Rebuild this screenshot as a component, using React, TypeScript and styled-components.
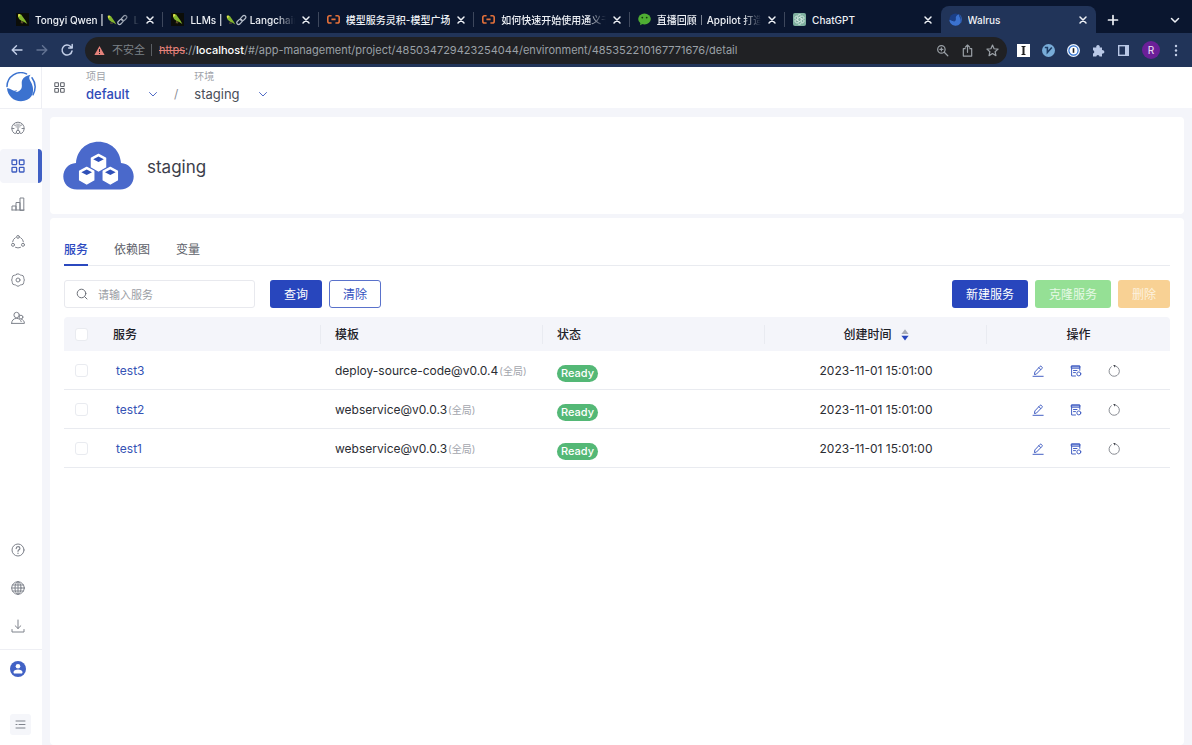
import React from "react";
import styled, { createGlobalStyle, css } from "styled-components";

const Global = createGlobalStyle`
  * { box-sizing: border-box; }
  body {
    margin: 0;
    background: #f4f5fa;
    color: #2b2d33;
    font: 12px/18px Inter, "Noto Sans CJK SC", sans-serif;
  }
  button, input, select { font: inherit; color: inherit; margin: 0; }
  button { border: 0; padding: 0; background: none; cursor: pointer; }
  a { text-decoration: none; }
  svg { display: block; flex: none; }
  h1 { margin: 0; }
`;

const Window = styled.div`
  display: flex;
  flex-direction: column;
  min-height: 100vh;
`;

/* ---------- browser frame ---------- */

const TabStrip = styled.div`
  display: flex;
  align-items: flex-end;
  height: 33px;
  padding-left: 8px;
  background: #0a162f;
  color: #eef1f6;
`;

const BrowserTab = styled.div<{ $active?: boolean; $divider?: boolean }>`
  display: flex;
  align-items: center;
  flex: 1 1 0;
  min-width: 0;
  height: 27px;
  padding: 0 8px;
  gap: 6px;
  position: relative;
  border-radius: 8px 8px 0 0;
  ${(p) => p.$active && css`background: #213459;`}
  ${(p) =>
    p.$divider &&
    css`
      &::after {
        content: "";
        position: absolute;
        right: 0;
        top: 6px;
        height: 15px;
        width: 1px;
        background: #3d475c;
      }
    `}
`;

const TabTitle = styled.span<{ $fade?: boolean }>`
  display: flex;
  align-items: center;
  flex: 1;
  min-width: 0;
  overflow: hidden;
  white-space: pre;
  font-size: 10px;
  font-weight: 500;
  ${(p) => p.$fade && css`mask-image: linear-gradient(to right, #000 82%, transparent 100%);`}
`;

const ChromeButton = styled.button`
  display: flex;
  align-items: center;
  justify-content: center;
  color: inherit;
`;

const StripEnd = styled.div`
  display: flex;
  justify-content: space-between;
  align-items: center;
  flex: 0 0 96px;
  height: 27px;
  padding: 0 12px 0 11px;
`;

const NavBar = styled.div`
  display: flex;
  align-items: center;
  height: 34px;
  padding: 0 9px 0 10px;
  background: #213459;
  color: #c3cfe8;
`;

const NavGroup = styled.div<{ $gap: number }>`
  display: flex;
  align-items: center;
  gap: ${(p) => p.$gap}px;
`;

const AddressBar = styled.div`
  display: flex;
  align-items: center;
  flex: 1;
  min-width: 0;
  height: 27px;
  margin: 0 10px 0 11px;
  padding: 0 8px 0 9px;
  border-radius: 14px;
  background: #202124;
  color: #9aa0a6;
  font-size: 11px;
`;

const Insecure = styled.span`
  padding: 0 6px 0 7px;
  line-height: 12px;
  margin-right: 7px;
  border-right: 1px solid #5b5f64;
  color: #7b8086;
`;

const Url = styled.span`
  flex: 1;
  overflow: hidden;
  white-space: nowrap;
  s { color: #e5827b; }
  b { color: #fff; font-weight: 500; }
`;

const Avatar = styled.span`
  display: grid;
  place-items: center;
  width: 18px;
  height: 18px;
  border-radius: 50%;
  background: #6b1f98;
  color: #f3e9fa;
  font-size: 10px;
`;

/* ---------- application ---------- */

const AppFrame = styled.div`
  display: flex;
  flex: 1;
`;

const Sidebar = styled.nav`
  display: flex;
  flex-direction: column;
  flex: 0 0 42px;
  background: #fff;
  color: #7f838c;
`;

const LogoLink = styled.a`
  display: flex;
  height: 42px;
  padding: 5px 0 0 6px;
  border-bottom: 1px solid #eeeff4;
  border-right: 1px solid #eeeff4;
`;

const MenuList = styled.div<{ $bottom?: boolean }>`
  display: flex;
  flex-direction: column;
  gap: 4px;
  padding: ${(p) => (p.$bottom ? "0 0 6px" : "2px 0 0")};
  margin-top: ${(p) => (p.$bottom ? "auto" : "0")};
  border-bottom: ${(p) => (p.$bottom ? "1px solid #eeeff4" : "0")};
`;

const MenuItem = styled.button<{ $active?: boolean }>`
  display: flex;
  align-items: center;
  height: 34px;
  padding-left: 11px;
  border-right: 4px solid transparent;
  ${(p) =>
    p.$active &&
    css`
      background: #f4f5fa;
      color: #3d5cc0;
      border-right-color: #3f5fc4;
      border-radius: 4px;
    `}
`;

const UserButton = styled.button`
  height: 38px;
  padding-left: 10px;
  display: flex;
  align-items: center;
`;

const CollapseButton = styled.button`
  display: grid;
  place-items: center;
  width: 21px;
  height: 21px;
  margin: 26px 0 10px 10px;
  border-radius: 3px;
  background: #f5f6fa;
`;

const Content = styled.div`
  display: flex;
  flex-direction: column;
  flex: 1;
  min-width: 0;
`;

const Header = styled.header`
  display: flex;
  align-items: center;
  height: 41px;
  padding-left: 12px;
  background: #fff;
  color: #5c6068;
`;

const Crumbs = styled.div`
  display: flex;
  align-items: flex-end;
  margin-left: 21px;
  padding-bottom: 3px;
`;

const Crumb = styled.label`
  display: grid;
  grid-template-columns: auto;
  justify-items: start;
  line-height: 16px;
  color: #a0a3aa;
  font-size: 10px;
`;

const PickerBox = styled.span`
  display: grid;
  align-items: center;
  color: #4f6ac6;
  > * { grid-area: 1 / 1; }
  > svg { justify-self: end; pointer-events: none; }
`;

const Picker = styled.select<{ $strong?: boolean }>`
  appearance: none;
  border: 0;
  background: transparent;
  padding: 0 28px 0 0;
  height: 20px;
  font-size: 13px;
  font-weight: ${(p) => (p.$strong ? 500 : 400)};
  color: ${(p) => (p.$strong ? "#2f4cb8" : "#4a4e58")};
`;

const Slash = styled.span`
  padding: 0 16px;
  line-height: 20px;
  color: #8d9098;
`;

const Main = styled.main`
  display: flex;
  flex-direction: column;
  flex: 1;
  gap: 4px;
  padding: 9px 8px 0;
`;

const Card = styled.section<{ $grow?: boolean }>`
  background: #fff;
  border-radius: 4px;
  padding: ${(p) => (p.$grow ? "16px 14px" : "24px 13px")};
  flex: ${(p) => (p.$grow ? "1" : "none")};
`;

const TitleRow = styled.div`
  display: flex;
  align-items: center;
  gap: 13px;
`;

const Title = styled.h1`
  padding-top: 2px;
  font-size: 17px;
  line-height: 24px;
  font-weight: 400;
  color: #3c404a;
`;

const Tabs = styled.div`
  display: flex;
  gap: 26px;
  border-bottom: 1px solid #e9ebf0;
`;

const Tab = styled.button<{ $active?: boolean }>`
  height: 32px;
  padding-top: 2px;
  margin-bottom: -1px;
  border-bottom: 2px solid ${(p) => (p.$active ? "#2b49bf" : "transparent")};
  color: ${(p) => (p.$active ? "#2b49bf" : "#5d6169")};
  font-weight: ${(p) => (p.$active ? 500 : 400)};
`;

const Toolbar = styled.div`
  display: flex;
  align-items: center;
  gap: 7px;
  padding: 14px 0 9px;
`;

const SearchBox = styled.label`
  display: flex;
  align-items: center;
  gap: 10px;
  width: 191px;
  height: 28px;
  padding: 0 11px;
  margin-right: 8px;
  border: 1px solid #e8e9ee;
  border-radius: 3px;
  color: #6c7078;
`;

const SearchInput = styled.input`
  flex: 1;
  min-width: 0;
  padding: 2px 0 0;
  border: 0;
  outline: 0;
  font-size: 11px;
  &::placeholder { color: #9a9da4; }
`;

const kinds = {
  primary: css`background: #2846bd; color: #fff;`,
  outline: css`background: #fff; color: #3553bf; border: 1px solid #5a72cb;`,
  success: css`background: #95e095; color: #e6f9e6;`,
  warning: css`background: #f8d194; color: #fdf1de;`,
};

const Button = styled.button<{ $kind: keyof typeof kinds }>`
  height: 28px;
  padding: 2px 14px 0;
  border-radius: 3px;
  ${(p) => kinds[p.$kind]}
`;

const OutlineButton = styled(Button)`
  padding: 2px 13px 0;
`;

const Spacer = styled.span`
  flex: 1;
`;

const Table = styled.table`
  width: 100%;
  table-layout: fixed;
  border-collapse: separate;
  border-spacing: 0;
`;

const Th = styled.th<{ $width?: string; $center?: boolean; $divider?: boolean }>`
  width: ${(p) => p.$width ?? "auto"};
  height: 34px;
  padding: 2px 14px 0;
  text-align: ${(p) => (p.$center ? "center" : "left")};
  font-weight: 500;
  color: #1d2027;
  background: ${(p) =>
    p.$divider
      ? "linear-gradient(#e9ebf1, #e9ebf1) right center / 1px 19px no-repeat #f4f5fa"
      : "#f4f5fa"};
  &:first-child { border-radius: 4px 0 0 0; padding: 0 11px; }
  &:last-child { border-radius: 0 4px 0 0; }
`;

const Td = styled.td<{ $center?: boolean }>`
  height: 39px;
  padding: 2px 14px 0;
  border-bottom: 1px solid #e9ebf0;
  white-space: nowrap;
  text-align: ${(p) => (p.$center ? "center" : "left")};
  &:first-child { padding: 0 11px; }
`;

const Checkbox = styled.input`
  appearance: none;
  display: block;
  width: 13px;
  height: 13px;
  margin: 0;
  border: 1px solid #e9ebf0;
  border-radius: 3px;
  background: #fff;
`;

const SortLabel = styled.button`
  display: inline-flex;
  align-items: center;
  gap: 9px;
  font-weight: 500;
  vertical-align: middle;
`;

const ServiceLink = styled.a`
  padding-left: 3px;
  color: #3553b5;
`;

const Scope = styled.span`
  margin-left: 1px;
  font-size: 10px;
  color: #a3a6ad;
`;

const Status = styled.span`
  display: block;
  width: fit-content;
  margin-top: 5px;
  padding: 0 4px;
  border-radius: 9px;
  background: #54b876;
  color: #fff;
  font-size: 11px;
  line-height: 17px;
  font-weight: 500;
`;

const Actions = styled.div`
  display: flex;
  justify-content: center;
  gap: 26px;
  padding-right: 5px;
  color: #4460c4;
`;

const IconButton = styled.button<{ $muted?: boolean }>`
  color: ${(p) => (p.$muted ? "#7b7e86" : "inherit")};
`;

/* ---------- drawings ---------- */

type IconProps = { size?: number; view?: number; width?: number; children: React.ReactNode };

const Icon = ({ size = 14, view = 14, width = 1, children }: IconProps) => (
  <svg
    width={size}
    height={size}
    viewBox={`0 0 ${view} ${view}`}
    fill="none"
    stroke="currentColor"
    strokeWidth={width}
    strokeLinecap="round"
    strokeLinejoin="round"
    aria-hidden="true"
  >
    {children}
  </svg>
);

const CloseIcon = () => (
  <Icon size={10} view={10} width={1.5}><path d="M2 2l6 6M8 2L2 8" /></Icon>
);

const ChevronIcon = ({ size = 10, width = 1 }: { size?: number; width?: number }) => (
  <Icon size={size} view={10} width={width}><path d="M1.5 3.500L5 7l3.500-3.500" /></Icon>
);

const ParrotShape = () => (
  <>
    <path d="M2 1.400C3.600.4 5.600 1.200 6.200 3l3.400 4.800 1.700 3.200-3.500-2.200C5 8 2.200 5.800 2 3.300z" fill="#84b62e" stroke="none" />
    <path d="M2 1.600l1.800-.6.6 1.700L2.300 4z" fill="#dfdf4b" stroke="none" />
    <path d="M5.600 8.200l-.4 2M7 8.800l-.6 1.600" stroke="#8a6b3b" strokeWidth=".8" />
  </>
);

const ParrotFavicon = () => (
  <svg width="13" height="13" viewBox="0 0 13 13" aria-hidden="true">
    <rect width="13" height="13" fill="#0b0d08" />
    <ParrotShape />
  </svg>
);

const ParrotLink = () => (
  <>
    <svg width="11" height="12" viewBox="0 0 12 12" aria-hidden="true"><ParrotShape /></svg>
    <svg width="11" height="12" viewBox="0 0 12 12" fill="none" stroke="#b5bdc9" strokeWidth="1.300" aria-hidden="true">
      <rect x="-3.300" y="-1.900" width="6.600" height="3.800" rx="1.900" transform="translate(3.800 8) rotate(-45)" />
      <rect x="-3.300" y="-1.900" width="6.600" height="3.800" rx="1.900" transform="translate(7.800 4) rotate(-45)" />
    </svg>
  </>
);

const AliyunFavicon = () => (
  <svg width="13" height="13" viewBox="0 0 13 13" fill="none" stroke="#e2703a" strokeWidth="1.600" aria-hidden="true">
    <path d="M4.600 2.800H2.600Q.8 2.800.8 4.600v3.600Q.8 10 2.600 10h2M8.400 2.800h2q1.800 0 1.800 1.800v3.600Q12.200 10 10.400 10h-2M4.400 6.400h4.200" />
  </svg>
);

const WechatFavicon = () => (
  <svg width="13" height="13" viewBox="0 0 13 13" aria-hidden="true">
    <ellipse cx="6.500" cy="6" rx="6.300" ry="5.400" fill="#4fae33" />
    <path d="M2.500 9.500L2 12.300l3-1.500z" fill="#4fae33" />
    <circle cx="4.300" cy="4.600" r=".9" fill="#123a0c" />
    <circle cx="8.700" cy="4.600" r=".9" fill="#123a0c" />
  </svg>
);

const GptFavicon = () => (
  <svg width="13" height="13" viewBox="0 0 13 13" fill="none" stroke="#e5f3ed" strokeWidth=".8" aria-hidden="true">
    <rect width="13" height="13" rx="2" fill="#7fb09f" stroke="none" />
    {[0, 60, 120, 180, 240, 300].map((a) => (
      <path key={a} d="M6.500 4.500L4.700 5.500V3.300C4.700 1.500 7.300 1 8.200 2.500" transform={`rotate(${a} 6.500 6.500)`} />
    ))}
  </svg>
);

const WalrusMark = ({ size, ring = true }: { size: number; ring?: boolean }) => (
  <svg width={size} height={size} viewBox="0 0 30 30" fill="none" aria-hidden="true">
    {ring ? (
      <path d="M1 14.500A13.900 13.900 0 0 1 20.500 1.900" stroke="#3b72cf" strokeWidth="1.500" strokeLinecap="round" />
    ) : (
      <circle cx="15" cy="15" r="14" fill="#1b3f86" />
    )}
    <path
      d="M24.600 2.700C21 3.400 17.600 5 16.200 8c-1.200 2.600.3 5.200-.6 7.900-.9 2.600-3.600 4.300-6.400 3.900 1-.5 1.500-1 1.700-1.700-1.600.8-3.400.8-4.700 0C4.700 17.300 3.600 16 1 16.200 1.600 23.500 7.500 29.300 15 29.300c4.600 0 8.400-2 10.500-5.200 2.300-3.800 1.900-8.300.4-12.100-1-2.500-2.600-4.100-2.700-6.300 0-1.100.5-2.100 1.400-3z"
      fill="#3b72cf"
    />
    <path d="M26 5.800c3.500 4.700 4 11.200 1 17" stroke="#3b72cf" strokeWidth="1.500" strokeLinecap="round" />
  </svg>
);

const GridIcon = ({ size = 14 }: { size?: number }) => (
  <Icon size={size} width={1.300}>
    <rect x="1" y="1" width="4.600" height="4.600" rx=".5" />
    <rect x="8.400" y="1" width="4.600" height="4.600" rx=".5" />
    <rect x="1" y="8.400" width="4.600" height="4.600" rx=".5" />
    <rect x="8.400" y="8.400" width="4.600" height="4.600" rx=".5" />
  </Icon>
);

const GaugeIcon = () => (
  <Icon>
    <path d="M4.700 12.300H3.200A6.200 6.200 0 1 1 10.800 12.300H9.300M7 3v6M1 7.500h2M11 7.500h2M3 3.500l1.300 1.300M11 3.500L9.700 4.800" />
    <path d="M5.200 2.800v3.500M8.800 2.800v3.500" strokeWidth=".6" />
    <circle cx="7" cy="11" r="1.700" />
  </Icon>
);

const ChartIcon = () => (
  <Icon><path d="M1 13V9h4v4M5 13V5.500h4V13M9 13V1h3.800v12zM1 13h12" /></Icon>
);

const OrbitIcon = () => (
  <Icon>
    <circle cx="7" cy="1.900" r="1.400" />
    <circle cx="2" cy="9.800" r="1.500" />
    <circle cx="12" cy="9.800" r="1.500" />
    <path d="M4.300 2.700A5.500 5.500 0 0 0 1.600 6.800M9.700 2.700a5.500 5.500 0 0 1 2.700 4.100M4.500 12.400a5.600 5.600 0 0 0 5 0" />
  </Icon>
);

const GearIcon = () => (
  <Icon>
    <path d="M5.300 1.500Q7-.1 8.700 1.500q.7.700 1.600.7 2.300-.1 2.400 2.100 0 .8.200 1.300.9 1.400 0 2.800-.2.500-.2 1.300-.1 2.200-2.400 2.100-.9 0-1.600.7Q7 14.100 5.300 12.500q-.7-.7-1.600-.7-2.300.1-2.400-2.100 0-.8-.2-1.300-.9-1.400 0-2.800.2-.5.200-1.300.1-2.200 2.400-2.100.9 0 1.600-.7z" />
    <circle cx="7" cy="7" r="2" />
  </Icon>
);

const PeopleIcon = () => (
  <Icon>
    <circle cx="5.600" cy="4" r="2.700" />
    <path d="M.6 12.400h12.800c0-2.100-1.100-3.600-2.900-4.200M.6 12.400c0-3 2-5 5-5 2.400 0 3.900 1.300 4.600 3.200" />
    <circle cx="10" cy="6.100" r="1.900" />
  </Icon>
);

const HelpIcon = () => (
  <Icon>
    <circle cx="7" cy="7" r="6" />
    <path d="M5.200 5.600c0-2.600 3.700-2.400 3.700-.2C8.900 6.700 7 6.900 7 8.300M7 10.200v.2" strokeWidth="1.200" />
  </Icon>
);

const GlobeIcon = () => (
  <Icon>
    <circle cx="7" cy="7" r="6.300" />
    <ellipse cx="7" cy="7" rx="3" ry="6.300" />
    <path d="M7 .7v12.600M.7 7h12.600M1.500 4h11M1.500 10h11" />
  </Icon>
);

const DownloadIcon = () => (
  <Icon><path d="M7 1v8.500M4.200 6.800L7 9.500l2.800-2.700M1 10.500V13h12v-2.500" /></Icon>
);

const UserIcon = () => (
  <svg width="16" height="16" viewBox="0 0 16 16" aria-hidden="true">
    <circle cx="8" cy="8" r="8" fill="#4262c5" />
    <circle cx="8" cy="5.200" r="2.300" fill="#fff" />
    <path d="M3.500 11.300c0-3.600 9-3.600 9 0 0 .8-.4 1.200-1.200 1.200H4.700c-.8 0-1.200-.4-1.200-1.200z" fill="#fff" />
  </svg>
);

const CollapseIcon = () => (
  <Icon size={11} view={11}><path d="M1 2h9M4 5.500h6M1 9h9M1 5.500h1" /></Icon>
);

const CloudIcon = () => (
  <svg width="71" height="49" viewBox="0 0 71 49" aria-hidden="true">
    <path
      d="M14 48.500C5.500 48.500.3 42.500.3 35.500c0-7.500 5-13 12.700-13.600C14 9.500 23 .8 35.500.8S57 9.500 58 21.900c7.500.6 12.700 6.100 12.700 13.600 0 7-5.200 13-13.700 13z"
      fill="#4a69cb"
    />
    {[[35.500, 21.500], [23.700, 34.500], [47.300, 34.500]].map(([x, y]) => (
      <g key={`${x}-${y}`} transform={`translate(${x} ${y})`}>
        <path d="M0-8L7-4.400V4.400L0 8.400-7 4.400V-4.400z" fill="#fff" stroke="#fff" strokeWidth="1.500" strokeLinejoin="round" />
        <path d="M0-6L5.300-3.300 0-.6-5.300-3.300z" fill="#2f50b8" />
      </g>
    ))}
  </svg>
);

const SortIcon = () => (
  <svg width="8" height="12" viewBox="0 0 8 12" aria-hidden="true">
    <path d="M4 .3L7.600 5H.4z" fill="#a9acb5" />
    <path d="M4 11.500L.4 6.800h7.200z" fill="#2846bd" />
  </svg>
);

const EditIcon = () => (
  <Icon size={12} view={12}>
    <path d="M1 11.300h10.200M2.500 9.200l.4-2.300L8 1.400q.7-.6 1.400 0l.6.6q.6.700 0 1.400L4.700 8.800zM6.900 2.700l1.900 1.900" />
  </Icon>
);

const RecordIcon = () => (
  <Icon size={12} view={12}>
    <path d="M1.600 1h8.200v2.200H1.600z" fill="currentColor" fillOpacity=".35" />
    <path d="M5.500 11H1.600V1h8.200v4.300M3.500 5.500h3.500M3.500 7.600h2" />
    <circle cx="8.800" cy="8.900" r="2" />
  </Icon>
);

const SpinIcon = () => (
  <Icon size={12} view={12} width={0.9}>
    <path d="M8 1.200A5.200 5.200 0 1 1 3.400 1.700" />
    <path d="M6 .5l1 .3-.3.8" stroke="#3a3d45" strokeWidth="1.200" />
  </Icon>
);

/* ---------- page data ---------- */

const browserTabs = [
  { icon: <ParrotFavicon />, title: <>{"Tongyi Qwen | "}<ParrotLink />{"  La"}</>, fade: true },
  { icon: <ParrotFavicon />, title: <>{"LLMs | "}<ParrotLink />{" Langchain"}</>, fade: true },
  { icon: <AliyunFavicon />, title: <>模型服务灵积-模型广场</> },
  { icon: <AliyunFavicon />, title: <>如何快速开始使用通义千</>, fade: true },
  { icon: <WechatFavicon />, title: <>直播回顾｜Appilot 打造</>, fade: true },
  { icon: <GptFavicon />, title: <>ChatGPT</> },
  { icon: <WalrusMark size={13} ring={false} />, title: <>Walrus</>, active: true },
];

const mainMenu = [
  { label: "仪表盘", icon: <GaugeIcon /> },
  { label: "应用管理", icon: <GridIcon />, active: true },
  { label: "统计", icon: <ChartIcon /> },
  { label: "运维中心", icon: <OrbitIcon /> },
  { label: "系统设置", icon: <GearIcon /> },
  { label: "用户", icon: <PeopleIcon /> },
];

const footMenu = [
  { label: "帮助", icon: <HelpIcon /> },
  { label: "语言", icon: <GlobeIcon /> },
  { label: "下载", icon: <DownloadIcon /> },
];

const services = [
  { name: "test3", template: "deploy-source-code@v0.0.4", created: "2023-11-01 15:01:00" },
  { name: "test2", template: "webservice@v0.0.3", created: "2023-11-01 15:01:00" },
  { name: "test1", template: "webservice@v0.0.3", created: "2023-11-01 15:01:00" },
];

const BrowserFrame = () => (
  <>
    <TabStrip>
      {browserTabs.map((t, i) => (
        <BrowserTab key={i} $active={t.active} $divider={i < 5}>
          {t.icon}
          <TabTitle $fade={t.fade}>{t.title}</TabTitle>
          <ChromeButton aria-label="关闭标签页"><CloseIcon /></ChromeButton>
        </BrowserTab>
      ))}
      <StripEnd>
        <ChromeButton aria-label="新标签页">
          <Icon size={12} view={12} width={1.700}><path d="M6 1.500v9M1.500 6h9" /></Icon>
        </ChromeButton>
        <ChromeButton aria-label="搜索标签页"><ChevronIcon width={1.500} /></ChromeButton>
      </StripEnd>
    </TabStrip>
    <NavBar>
      <NavGroup $gap={11}>
        <ChromeButton aria-label="后退">
          <Icon width={1.400}><path d="M12 7H2.500M6.500 2.700L2.200 7l4.300 4.300" /></Icon>
        </ChromeButton>
        <ChromeButton aria-label="前进" disabled style={{ opacity: 0.4 }}>
          <Icon width={1.400}><path d="M2 7h9.500M7.500 2.700L11.800 7l-4.300 4.300" /></Icon>
        </ChromeButton>
        <ChromeButton aria-label="刷新">
          <Icon width={1.500}><path d="M12 8A5 5 0 1 1 10.600 3.500L12 4.800M12.200 1.500v3.500H8.700" /></Icon>
        </ChromeButton>
      </NavGroup>
      <AddressBar>
        <svg width="11" height="11" viewBox="0 0 11 11" aria-hidden="true">
          <path d="M5.500 1L10.600 10H.4z" fill="#e5827b" />
          <path d="M5.500 4v3M5.500 8v1" stroke="#202124" />
        </svg>
        <Insecure>不安全</Insecure>
        <Url>
          <s>https</s>://<b>localhost</b>
          /#/app-management/project/485034729423254044/environment/485352210167771676/detail
        </Url>
        <NavGroup $gap={12}>
          <ChromeButton aria-label="缩放">
            <Icon size={13} width={1.300}><circle cx="5.800" cy="5.800" r="4" /><path d="M8.900 8.900l3.800 3.800M4.200 5.800h3.200M5.800 4.200v3.200" /></Icon>
          </ChromeButton>
          <ChromeButton aria-label="分享">
            <Icon size={13} width={1.300}><path d="M4.500 5H2.500v8h9V5h-2M7 9V1.200M4.700 3.300L7 1.100l2.300 2.200" /></Icon>
          </ChromeButton>
          <ChromeButton aria-label="收藏">
            <Icon size={13} width={1.300}><path d="M7 1.200l1.700 3.900 4.300.4-3.200 2.800.9 4.200L7 10.300l-3.700 2.200.9-4.200L1 5.500l4.300-.4z" /></Icon>
          </ChromeButton>
        </NavGroup>
      </AddressBar>
      <NavGroup $gap={12}>
        <svg width="13" height="13" viewBox="0 0 13 13" aria-hidden="true">
          <rect width="13" height="13" fill="#fff" />
          <path d="M4.500 2.500h4M4.500 10.500h4" stroke="#222" />
          <path d="M6.500 2.500v8" stroke="#222" strokeWidth="2" />
        </svg>
        <svg width="13" height="13" viewBox="0 0 13 13" aria-hidden="true">
          <circle cx="6.500" cy="6.500" r="6.500" fill="#78acd8" />
          <path d="M2.800 3.500h2.600v5L9.800 3.500" stroke="#1d3c66" strokeWidth="1.600" fill="none" />
        </svg>
        <svg width="13" height="13" viewBox="0 0 13 13" aria-hidden="true">
          <circle cx="6.500" cy="6.500" r="6.500" fill="#eef4fc" />
          <circle cx="6.500" cy="6.500" r="4.600" fill="#fff" stroke="#2b6fd0" strokeWidth="1.200" />
          <path d="M6.500 4.200v4.600" stroke="#222" strokeWidth="1.600" />
        </svg>
        <svg width="13" height="13" viewBox="0 0 13 13" fill="#b9c8e6" aria-hidden="true">
          <path d="M1 3.500h3.300a1.800 1.800 0 1 1 3.400 0H10v2.700a1.800 1.800 0 1 1 0 3.400v2.900H7.500a1.600 1.600 0 0 0-3.200 0H1V9.600a1.700 1.700 0 0 0 0-3.300z" />
        </svg>
        <svg width="13" height="13" viewBox="0 0 13 13" aria-hidden="true">
          <rect x="1.700" y="1.700" width="9.600" height="9.600" fill="none" stroke="#b9c8e6" strokeWidth="1.400" />
          <path d="M8 1.500h3.500v10H8z" fill="#b9c8e6" />
        </svg>
        <NavGroup $gap={9}>
          <Avatar>R</Avatar>
          <ChromeButton aria-label="菜单">
            <svg width="14" height="13" viewBox="0 0 14 13" fill="currentColor" aria-hidden="true">
              <circle cx="7" cy="2" r="1.200" />
              <circle cx="7" cy="6.500" r="1.200" />
              <circle cx="7" cy="11" r="1.200" />
            </svg>
          </ChromeButton>
        </NavGroup>
      </NavGroup>
    </NavBar>
  </>
);

const ServiceTable = () => (
  <Table>
    <thead>
      <tr>
        <Th $width="35px"><Checkbox type="checkbox" aria-label="全选" /></Th>
        <Th $divider>服务</Th>
        <Th $divider>模板</Th>
        <Th $divider>状态</Th>
        <Th $divider $center>
          <SortLabel>创建时间<SortIcon /></SortLabel>
        </Th>
        <Th $center $width="183px">操作</Th>
      </tr>
    </thead>
    <tbody>
      {services.map((s) => (
        <tr key={s.name}>
          <Td><Checkbox type="checkbox" aria-label={s.name} /></Td>
          <Td><ServiceLink href="#">{s.name}</ServiceLink></Td>
          <Td>{s.template}<Scope>(全局)</Scope></Td>
          <Td><Status>Ready</Status></Td>
          <Td $center>{s.created}</Td>
          <Td>
            <Actions>
              <IconButton aria-label="编辑"><EditIcon /></IconButton>
              <IconButton aria-label="日志"><RecordIcon /></IconButton>
              <IconButton aria-label="更多" $muted><SpinIcon /></IconButton>
            </Actions>
          </Td>
        </tr>
      ))}
    </tbody>
  </Table>
);

export default function App() {
  return (
    <Window>
      <Global />
      <BrowserFrame />
      <AppFrame>
        <Sidebar>
          <LogoLink href="#" aria-label="Walrus"><WalrusMark size={30} /></LogoLink>
          <MenuList>
            {mainMenu.map((m) => (
              <MenuItem key={m.label} aria-label={m.label} $active={m.active}>{m.icon}</MenuItem>
            ))}
          </MenuList>
          <MenuList $bottom>
            {footMenu.map((m) => (
              <MenuItem key={m.label} aria-label={m.label}>{m.icon}</MenuItem>
            ))}
          </MenuList>
          <UserButton aria-label="账户"><UserIcon /></UserButton>
          <CollapseButton aria-label="收起菜单"><CollapseIcon /></CollapseButton>
        </Sidebar>
        <Content>
          <Header>
            <GridIcon size={11} />
            <Crumbs>
              <Crumb>
                项目
                <PickerBox>
                  <Picker $strong defaultValue="default"><option>default</option></Picker>
                  <ChevronIcon />
                </PickerBox>
              </Crumb>
              <Slash>/</Slash>
              <Crumb>
                环境
                <PickerBox>
                  <Picker defaultValue="staging"><option>staging</option></Picker>
                  <ChevronIcon />
                </PickerBox>
              </Crumb>
            </Crumbs>
          </Header>
          <Main>
            <Card>
              <TitleRow>
                <CloudIcon />
                <Title>staging</Title>
              </TitleRow>
            </Card>
            <Card $grow>
              <Tabs role="tablist">
                <Tab role="tab" aria-selected $active>服务</Tab>
                <Tab role="tab">依赖图</Tab>
                <Tab role="tab">变量</Tab>
              </Tabs>
              <Toolbar>
                <SearchBox>
                  <Icon size={12} view={12}><circle cx="5.500" cy="5.500" r="4.300" /><path d="M8.700 8.700l2.300 2.300" /></Icon>
                  <SearchInput type="text" placeholder="请输入服务" aria-label="服务" />
                </SearchBox>
                <Button $kind="primary">查询</Button>
                <OutlineButton $kind="outline">清除</OutlineButton>
                <Spacer />
                <Button $kind="primary">新建服务</Button>
                <Button $kind="success">克隆服务</Button>
                <Button $kind="warning">删除</Button>
              </Toolbar>
              <ServiceTable />
            </Card>
          </Main>
        </Content>
      </AppFrame>
    </Window>
  );
}
